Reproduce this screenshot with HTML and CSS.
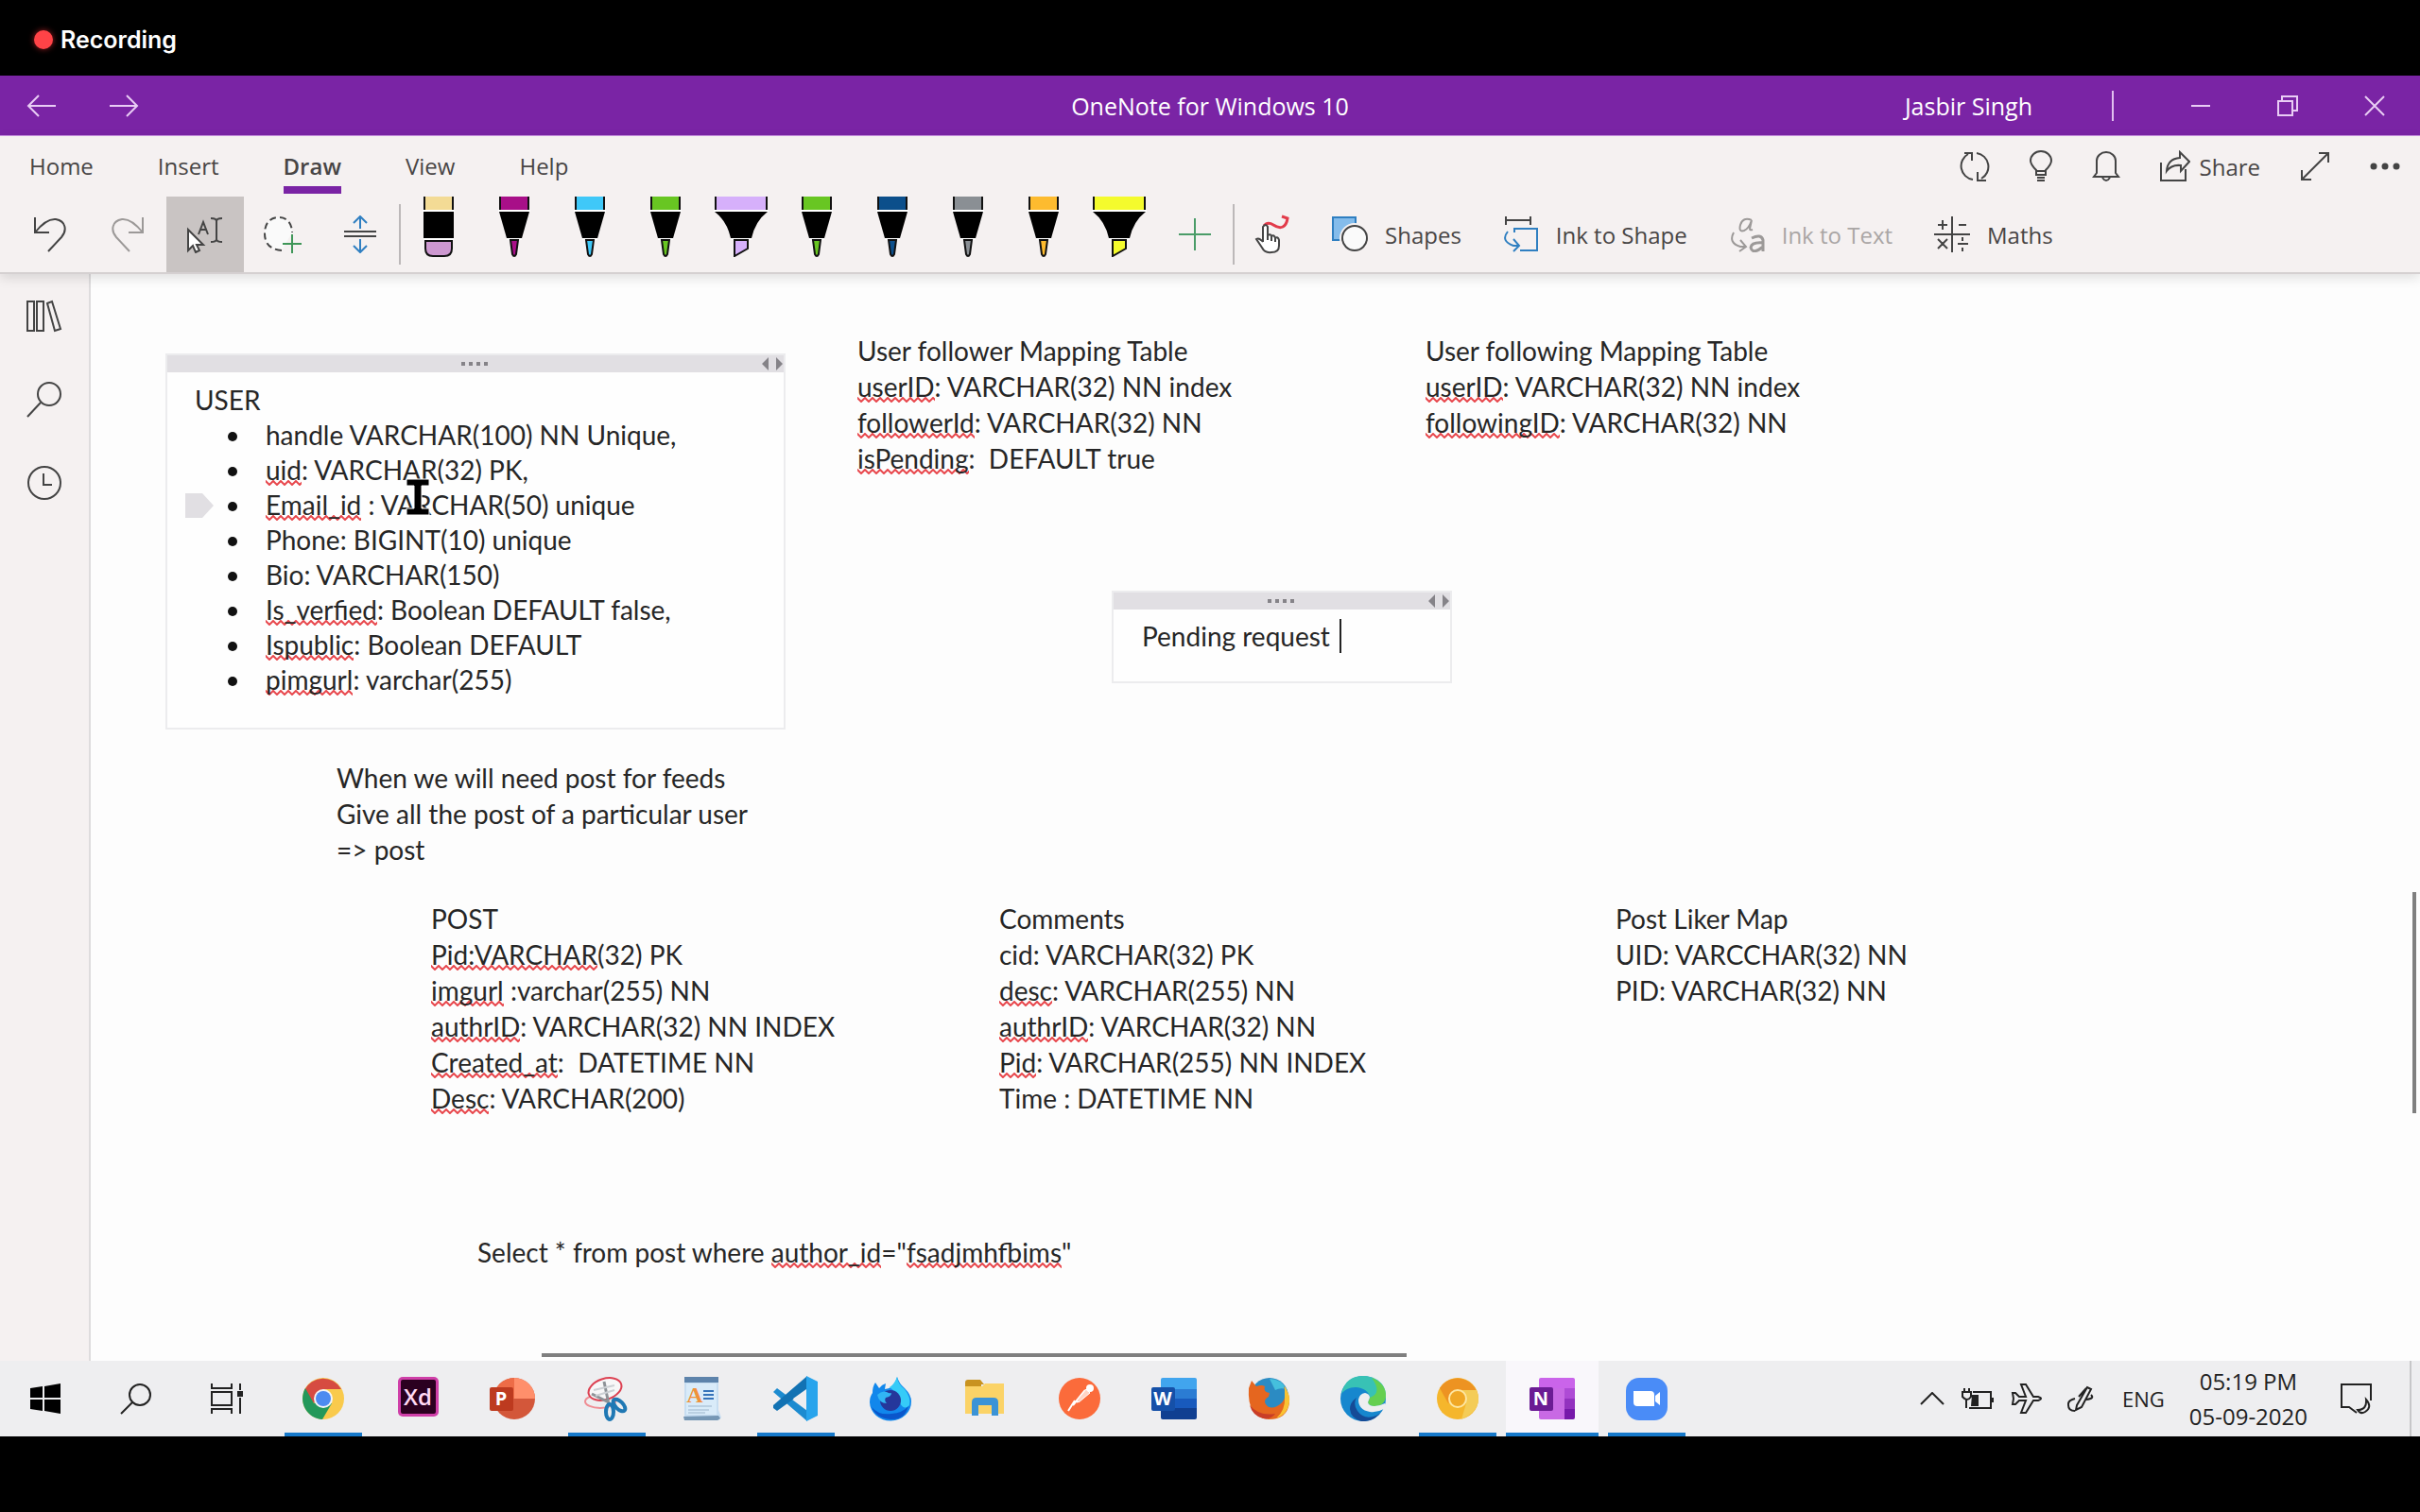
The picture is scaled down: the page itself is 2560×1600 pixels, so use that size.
FILE: index.html
```html
<!DOCTYPE html>
<html lang="en">
<head>
<meta charset="utf-8">
<title>OneNote for Windows 10</title>
<link rel="stylesheet" href="styles.css">
</head>
<body>
<svg class="sprite" aria-hidden="true">
  <symbol id="pen" viewBox="0 0 34 64">
    <path d="M1 0h32v14H1z" fill="currentColor"/><path d="M2 0v14M32 0v14" stroke="#111" stroke-width="2"/>
    <path d="M0 14h34v2H0z" fill="#fff"/><path d="M1 16h32l-8 28H9z"/><path d="M9 44h16v2H9z" fill="#fff"/>
    <path d="M13 46h8l-2 15q-2 4-4 0z" fill="currentColor" stroke="#111" stroke-width="2"/>
  </symbol>
  <symbol id="marker" viewBox="0 0 58 64">
    <path d="M1 0h56v14H1z" fill="currentColor"/><path d="M2 0v14M56 0v14" stroke="#111" stroke-width="2"/>
    <path d="M0 14h58v2H0z" fill="#fff"/><path d="M1 16h56Q44 26 40 44H18Q14 26 1 16z"/><path d="M18 44h22v2H18z" fill="#fff"/>
    <path d="M22 46h14v9l-14 8z" fill="currentColor" stroke="#111" stroke-width="2"/>
  </symbol>
</svg>

<div class="recording"><span class="rec-dot"></span>Recording</div>

<header class="titlebar">
  <div class="nav">
    <button aria-label="Back"><svg width="32" height="26" viewBox="0 0 32 26"><path d="M31 13H2M13 2 2 13l11 11"/></svg></button>
    <button aria-label="Forward"><svg width="32" height="26" viewBox="0 0 32 26"><path d="M1 13h29M19 2l11 11-11 11"/></svg></button>
  </div>
  <h1>OneNote for Windows 10</h1>
  <div class="window">
    <span class="account">Jasbir Singh</span>
    <span class="bar"></span>
    <button aria-label="Minimise"><svg width="22" height="22" viewBox="0 0 22 22"><path d="M1 11h20"/></svg></button>
    <button aria-label="Restore"><svg width="22" height="22" viewBox="0 0 22 22"><path d="M1 6h15v15H1zM5 6V1h16v15h-5"/></svg></button>
    <button aria-label="Close"><svg width="22" height="22" viewBox="0 0 22 22"><path d="m1 1 20 20M21 1 1 21"/></svg></button>
  </div>
</header>

<section class="ribbon">
  <div class="tabrow">
    <nav class="tabs">
      <a href="#home">Home</a><a href="#insert">Insert</a><a href="#draw" class="current">Draw</a><a href="#view">View</a><a href="#help">Help</a>
    </nav>
    <div class="actions">
      <button aria-label="Sync"><svg width="32" height="34" viewBox="0 0 32 34"><path d="M14 31A14.500 14.500 0 0 1 9 4M5 3h8v8M18 3a14.500 14.500 0 0 1 5 27M28 32h-9v-9"/></svg></button>
      <button aria-label="Tell me"><svg width="24" height="34" viewBox="0 0 24 34"><path d="M7 26v-5Q1 15 1 11a11 10 0 0 1 22 0q0 4-6 10v5zM7 22h10M8 32h8M8 29h8"/></svg></button>
      <button aria-label="Notifications"><svg width="30" height="34" viewBox="0 0 30 34"><path d="M5 24V11a10 9 0 0 1 20 0v13l3 4H2zM11 29q4 6 8 0"/></svg></button>
      <button class="share"><svg width="32" height="34" viewBox="0 0 32 34"><path d="M1 13v19h26V20M21 2l10 10-9 10v-6q-10-1-15 6 1-13 14-14z"/></svg>Share</button>
      <button aria-label="Full screen"><svg width="32" height="32" viewBox="0 0 32 32"><path d="M2 30 30 2M20 2h10v10M2 20v10h10"/></svg></button>
      <button aria-label="More"><svg width="32" height="8" viewBox="0 0 32 8"><g fill="#444" stroke="none"><circle cx="4" cy="4" r="3.500"/><circle cx="16" cy="4" r="3.500"/><circle cx="28" cy="4" r="3.500"/></g></svg></button>
    </div>
  </div>
  <div class="toolbar">
    <button class="tool" aria-label="Undo"><svg width="36" height="40" viewBox="0 0 36 40"><path d="M2 2v16h15M2 18Q14 3 24 4c11 2 12 12 6 19L16 38"/></svg></button>
    <button class="tool faded" aria-label="Redo"><svg width="36" height="40" viewBox="0 0 36 40"><path d="M34 2v16H19M34 18Q22 3 12 4C1 6 0 16 6 23l14 15"/></svg></button>
    <button class="tool pressed" aria-label="Select objects or type text"><svg width="40" height="40" viewBox="0 0 40 40"><path d="M2 15v22l5-5 3 7 4-2-3-6h7z" fill="#fff"/><path d="m13 20 5-13 5 13M15 15h6M26 3q6 0 6 3 0-3 6-3M32 6v20M26 28q6 0 6-3 0 3 6 3"/></svg></button>
    <button class="tool" aria-label="Lasso select"><svg width="42" height="42" viewBox="0 0 42 42"><path d="M20 38C7 37 2 30 2 20 2 9 8 3 17 3s14 7 14 16" fill="#fafafa" stroke-dasharray="7 4"/><path d="M31 21v20M21 31h20" stroke="#3f9658"/></svg></button>
    <button class="tool" aria-label="Insert space"><svg width="36" height="40" viewBox="0 0 36 40"><path d="M1 17h34M1 22h34"/><path d="M18 14V2M11 8l7-7 7 7M18 25v13M11 32l7 7 7-7" stroke="#2f7fc1"/></svg></button>
    <span class="rule"></span>
    <button class="pen" aria-label="Eraser"><svg width="34" height="64" viewBox="0 0 34 64"><path d="M1 0h32v14H1z" fill="#f3db95" stroke="none"/><path d="M2 0v14M32 0v14" stroke="#111"/><path d="M0 14h34v2H0zM1 44h32v2H1z" fill="#fff" stroke="none"/><path d="M1 16h32v28H1z" fill="#000" stroke="none"/><path d="M3 47h28v8q0 8-8 8H11q-8 0-8-8z" fill="#cd98d0" stroke="#111"/></svg></button>
    <button class="pen magenta" aria-label="Magenta pen"><svg width="34" height="64"><use href="#pen"/></svg></button>
    <button class="pen cyan" aria-label="Cyan pen"><svg width="34" height="64"><use href="#pen"/></svg></button>
    <button class="pen green" aria-label="Green pen"><svg width="34" height="64"><use href="#pen"/></svg></button>
    <button class="pen lilac" aria-label="Lilac highlighter"><svg width="58" height="64"><use href="#marker"/></svg></button>
    <button class="pen green" aria-label="Green pen"><svg width="34" height="64"><use href="#pen"/></svg></button>
    <button class="pen blue" aria-label="Blue pen"><svg width="34" height="64"><use href="#pen"/></svg></button>
    <button class="pen grey" aria-label="Grey pen"><svg width="34" height="64"><use href="#pen"/></svg></button>
    <button class="pen orange" aria-label="Orange pen"><svg width="34" height="64"><use href="#pen"/></svg></button>
    <button class="pen yellow" aria-label="Yellow highlighter"><svg width="58" height="64"><use href="#marker"/></svg></button>
    <button class="pen add" aria-label="Add pen"><svg width="36" height="36" viewBox="0 0 36 36"><path d="M18 1v34M1 18h34" stroke="#4a9c68"/></svg></button>
    <span class="rule"></span>
    <div class="convert">
      <button aria-label="Draw with touch"><svg width="38" height="42" viewBox="0 0 38 42"><path d="M10 12q4-5 10-1t10 2 5-9l-6-2" stroke="#e23b4a" stroke-width="3"/><path d="M9 29V13q3-4 5 0v9q3-2 4 1 3-2 4 2 3-2 4 2v6q0 7-8 7-7 1-10-5l-6-9q3-2 7 3M14 22v5M18 23v5M22 25v4" fill="#fff"/></svg></button>
      <button><svg width="38" height="38" viewBox="0 0 38 38"><path d="M1 1h24v24H1z" fill="#84bceb" stroke="#2f7fc1"/><circle cx="24" cy="23" r="13" fill="#fafafa" stroke="#f5f1f1" stroke-width="6"/><circle cx="24" cy="23" r="13" fill="#fafafa"/></svg>Shapes</button>
      <button><svg width="38" height="38" viewBox="0 0 38 38"><path d="M3 4h26M3 0v9M29 0v9"/><path d="M12 17v-4h24v23H18M5 16q-8 10 6 15h6M11 24l6 7-6 6" stroke="#2f7fc1"/></svg>Ink to Shape</button>
      <button class="faded" disabled><svg width="38" height="38" viewBox="0 0 38 38"><path d="M24 4q-9-4-12 5-2 8 4 6 5-2 8-11l-2 9q0 2 3 1M5 17q-6 11 7 15h6M12 25l6 7-7 5"/><path d="M24 23q10-5 12 2v12M36 28q-12-1-13 5 2 8 13-1" stroke-width="3"/></svg>Ink to Text</button>
      <button><svg width="38" height="38" viewBox="0 0 38 38"><path d="M19 0v38M0 19h38M4 9h10M9 4v10M26 9h8M4 24l10 10M14 24 4 34M25 29h11M30 22v4M30 33v4"/></svg>Maths</button>
    </div>
  </div>
</section>

<main class="workspace">
  <aside class="rail">
    <button aria-label="Notebooks"><svg width="38" height="36" viewBox="0 0 38 36"><path d="M1 2h7v31H1zM11 2h7v31h-7zM22 4l5-2 9 29-6 2z"/></svg></button>
    <button aria-label="Search"><svg width="38" height="40" viewBox="0 0 38 40"><circle cx="24" cy="14" r="12"/><path d="M15 23 1 38"/></svg></button>
    <button aria-label="Recent notes"><svg width="38" height="38" viewBox="0 0 38 38"><circle cx="19" cy="19" r="17"/><path d="M18 9v12h9"/></svg></button>
  </aside>
  <section class="canvas" aria-label="Page">
    <article class="note framed user">
      <div class="grip"><svg class="dots" width="30" height="4" viewBox="0 0 30 4"><path d="M0 0h4v4H0zM8 0h4v4H8zM16 0h4v4h-4zM24 0h4v4h-4z"/></svg><svg class="sizer" width="24" height="14" viewBox="0 0 24 14"><path d="M8 0v14L1 7zM16 0v14l7-7z"/></svg></div>
      <div class="body">
        <p>USER</p>
        <ul>
          <li>handle VARCHAR(100) NN Unique,</li>
          <li><u>uid</u>: VARCHAR(32) PK,</li>
          <li class="marked"><u>Email_id</u> : VARCHAR(50) unique</li>
          <li>Phone: BIGINT(10) unique</li>
          <li>Bio: VARCHAR(150)</li>
          <li><u>Is_verfied</u>: Boolean DEFAULT false,</li>
          <li><u>Ispublic</u>: Boolean DEFAULT</li>
          <li><u>pimgurl</u>: varchar(255)</li>
        </ul>
      </div>
    </article>
    <article class="note follower">
      <p>User follower Mapping Table</p>
      <p><u>userID</u>: VARCHAR(32) NN index</p>
      <p><u>followerId</u>: VARCHAR(32) NN</p>
      <p><u>isPending</u>:&nbsp; DEFAULT true</p>
    </article>
    <article class="note following">
      <p>User following Mapping Table</p>
      <p><u>userID</u>: VARCHAR(32) NN index</p>
      <p><u>followingID</u>: VARCHAR(32) NN</p>
    </article>
    <article class="note framed pending">
      <div class="grip"><svg class="dots" width="30" height="4" viewBox="0 0 30 4"><path d="M0 0h4v4H0zM8 0h4v4H8zM16 0h4v4h-4zM24 0h4v4h-4z"/></svg><svg class="sizer" width="24" height="14" viewBox="0 0 24 14"><path d="M8 0v14L1 7zM16 0v14l7-7z"/></svg></div>
      <div class="body"><p>Pending request<span class="caret"></span></p></div>
    </article>
    <article class="note feeds">
      <p>When we will need post for feeds</p>
      <p>Give all the post of a particular user</p>
      <p>=&gt; post</p>
    </article>
    <article class="note post">
      <p>POST</p>
      <p><u>Pid:VARCHAR</u>(32) PK</p>
      <p><u>imgurl</u> :varchar(255) NN</p>
      <p><u>authrID</u>: VARCHAR(32) NN INDEX</p>
      <p><u>Created_at</u>:&nbsp; DATETIME NN</p>
      <p><u>Desc</u>: VARCHAR(200)</p>
    </article>
    <article class="note comments">
      <p>Comments</p>
      <p>cid: VARCHAR(32) PK</p>
      <p><u>desc</u>: VARCHAR(255) NN</p>
      <p><u>authrID</u>: VARCHAR(32) NN</p>
      <p><u>Pid</u>: VARCHAR(255) NN INDEX</p>
      <p>Time : DATETIME NN</p>
    </article>
    <article class="note liker">
      <p>Post Liker Map</p>
      <p>UID: VARCCHAR(32) NN</p>
      <p>PID: VARCHAR(32) NN</p>
    </article>
    <article class="note query">
      <p>Select * from post where <u>author_id</u>="<u>fsadjmhfbims</u>"</p>
    </article>
    <svg class="pointer" width="28" height="40" viewBox="0 0 28 40"><path d="M2 1h24v7h-8v24h8v7H2v-7h8V8H2z" stroke="#fff" stroke-width="1"/></svg>
    <span class="scroll-y"></span>
    <span class="scroll-x"></span>
  </section>
</main>

<footer class="taskbar">
  <div class="system">
    <button aria-label="Start"><svg width="32" height="32" viewBox="0 0 32 32"><path d="M0 5l13-2v12H0zM15 3l17-3v15H15zM0 17h13v12L0 27zM15 17h17v15l-17-3z"/></svg></button>
    <button aria-label="Search"><svg class="line" width="34" height="34" viewBox="0 0 34 34"><circle cx="21" cy="13" r="11"/><path d="M13 21 1 33"/></svg></button>
    <button aria-label="Task view"><svg class="line" width="34" height="34" viewBox="0 0 34 34"><path d="M1 1v5h21V1M1 10h21v14H1zM1 33v-5h21v5M31 1v7M31 16v17"/><path d="M29 10h4v4h-4z" fill="#222"/></svg></button>
  </div>
  <div class="apps">
    <button class="open" aria-label="Chrome"><svg width="46" height="46" viewBox="0 0 46 46"><circle cx="23" cy="23" r="22" fill="#f9ca4c"/><path d="M3 14A22 22 0 0 1 42 13H23L13 28z" fill="#d64b41"/><path d="M4 12a22 22 0 0 0 18 33l10-17-9-5-10 5z" fill="#23985a"/><circle cx="23" cy="23" r="10" fill="#f4f4f4"/><circle cx="23" cy="23" r="8" fill="#4c8bf0"/></svg></button>
    <button aria-label="Adobe XD"><svg width="46" height="46" viewBox="0 0 46 46"><rect x="2" y="0" width="43" height="42" rx="5" fill="#cf3fa8"/><rect x="5" y="3" width="37" height="36" rx="2" fill="#2b0020"/><text x="23" y="30" text-anchor="middle" class="xd">Xd</text></svg></button>
    <button aria-label="PowerPoint"><svg width="48" height="46" viewBox="0 0 48 46"><circle cx="26" cy="23" r="22" fill="#d3573a"/><path d="M26 1a22 22 0 0 1 22 22H26z" fill="#ff8f6b"/><path d="M26 1v22H4A22 22 0 0 1 26 1z" fill="#ed6c47"/><rect y="11" width="25" height="25" rx="2" fill="#bd3a1f"/><text x="12" y="30" text-anchor="middle" class="glyph">P</text></svg></button>
    <button class="open" aria-label="Snipping Tool"><svg width="48" height="48" viewBox="0 0 48 48"><ellipse cx="17" cy="27" rx="16" ry="7" fill="none" stroke="#ef8d94" stroke-width="2"/><ellipse cx="22" cy="14" rx="18" ry="11" transform="rotate(-18 22 14)" fill="#f7f7f8" stroke="#dc4152" stroke-width="2"/><path d="m21 6 5 24M8 19l18 9" stroke="#8d9297" stroke-width="3"/><path d="M10 15l22-5M12 21l20-6" stroke="#ccd0d4" stroke-width="2"/><ellipse cx="27" cy="38" rx="4" ry="8" fill="none" stroke="#1f78b4" stroke-width="4"/><ellipse cx="37" cy="31" rx="4" ry="8" transform="rotate(-45 37 31)" fill="none" stroke="#1f78b4" stroke-width="4"/></svg></button>
    <button aria-label="WordPad"><svg width="44" height="48" viewBox="0 0 44 48"><path d="M4 1h36v35l3 8-3 3H4z" fill="#c7ddf1"/><path d="M4 1h36v6H4z" fill="#5d83ab"/><path d="M6 8h32v33H6z" fill="#d9ebf9"/><path d="m3 43 37-1 2 3-3 2H4z" fill="#7697b5"/><text x="15" y="28" text-anchor="middle" class="wordpad">A</text><path d="M24 16h11M24 20h11M24 24h11" stroke="#3673ba" stroke-width="2"/><path d="M8 32h25M8 36h22M8 39h18" stroke="#9cb5cb" stroke-width="1"/></svg></button>
    <button class="open" aria-label="Visual Studio Code"><svg width="48" height="48" viewBox="0 0 48 48"><path d="M4 13 36 37v11L0 17z" fill="#1c8bd0"/><path d="M0 31 36 0v14L4 37l-4-3z" fill="#1272b3"/><path d="M35 0l12 6v36l-12 6z" fill="#28a4ec"/><path d="m35 14-14 10 14 11z" fill="#eeeef0"/></svg></button>
    <button aria-label="Firefox Developer Edition"><svg width="46" height="48" viewBox="0 0 46 48"><path d="M4 18q0-7 3-11l4 6q3-4 7-5l-1 6q8-1 11-7l2-6q2 7 8 12 7 7 7 14A22 20 0 0 1 1 28q0-6 3-10z" fill="#1187ec"/><path d="M22 12q5-3 8-11 1 8 8 13 7 9 5 17-5 6-10-2-2-11-11-17z" fill="#35cbf8"/><circle cx="23" cy="26" r="11" fill="#25379b"/><path d="M9 20q5-5 10-3 3 2 5 1 0 4-6 5-2 3 1 6-8 0-10-9z" fill="#31b5f4"/><path d="M3 33q8 9 21 7 12-1 18-8-4 15-19 14T3 33z" fill="#0a56cb"/></svg></button>
    <button aria-label="File Explorer"><svg width="46" height="40" viewBox="0 0 46 40"><path d="M2 3q0-3 3-3h13l4 5h-3v3H2z" fill="#c99320"/><path d="M2 7h18l3-3h20v32H2z" fill="#fbd367"/><path d="M9 38V24q0-5 5-5h18q5 0 5 5v14h-7V27H16v11z" fill="#3b93d6"/></svg></button>
    <button aria-label="Postman"><svg width="46" height="46" viewBox="0 0 46 46"><circle cx="23" cy="23" r="22" fill="#fb6b3b"/><path d="M11 36 18 25M16 30l13-16M20 27l12-12" stroke="#fff" stroke-width="2"/><path d="m20 25 10-12 4 4-12 10z" fill="#ffd4c5" stroke="#fff"/><circle cx="34" cy="12" r="4" fill="#fff"/></svg></button>
    <button aria-label="Word"><svg width="48" height="46" viewBox="0 0 48 46"><path d="M12 1h34q2 0 2 2v10H10V3q0-2 2-2z" fill="#41a5ee"/><path d="M10 13h38v10H10z" fill="#2b7cd3"/><path d="M10 23h38v10H10z" fill="#185abd"/><path d="M10 33h38v10q0 2-2 2H12q-2 0-2-2z" fill="#103f91"/><rect y="11" width="25" height="25" rx="2" fill="#1550a8"/><text x="12" y="30" text-anchor="middle" class="glyph">W</text></svg></button>
    <button aria-label="Firefox"><svg width="46" height="46" viewBox="0 0 46 46"><circle cx="24" cy="21" r="20" fill="#2b8bc3"/><path d="M24 2q12 0 18 11-7-2-12 1-4-8-6-12z" fill="#45c0dd"/><path d="M2 12l3-8 5 6q6-2 9 0-2 6 5 7l-1 4q-6 3-3 8 4 6 12 2 12-6 7-21 7 9 6 17-2 18-22 18Q0 43 2 12z" fill="#e5661f"/><path d="M40 10q6 9 5 17-2 13-14 17 10-9 9-22z" fill="#f9c333"/><path d="M3 30q10 12 27 9-5 7-13 5Q6 41 3 30z" fill="#c93d27"/></svg></button>
    <button aria-label="Edge"><svg width="48" height="48" viewBox="0 0 48 48"><circle cx="24" cy="24" r="24" fill="#1687ce"/><path d="M1 19C4 5 13 0 24 0c14 0 24 9 24 20 0 8-5 12-12 12-5 0-7-2-7-4 0-1 2-3 2-5 0-6-7-11-15-11-7 0-12 3-15 7z" fill="#38c2b5"/><path d="M33 2q15 6 15 19-1 11-12 11-5 0-7-4l2-5Q45 18 33 2z" fill="#65cf50"/><path d="M17 23q-4 7 1 14 7 10 20 5 4-2 6-5-8 12-22 11-11-3-12-13 0-7 7-12z" fill="#154b96"/><path d="M19 25q1-6 7-7 5 1 5 5l-2 5q1 4 7 4 5 0 11-3 2 3-1 6-7 4-15 3-12-2-12-13z" fill="#eeeef0"/></svg></button>
    <button class="open" aria-label="Chrome Canary"><svg width="46" height="46" viewBox="0 0 46 46"><circle cx="23" cy="23" r="22" fill="#f5b62c"/><path d="M4 12a22 22 0 0 1 38 1l2 5H23L13 28z" fill="#ed9322"/><path d="M23 14h20q8 20-16 31l5-17z" fill="#f4cc57"/><circle cx="23" cy="23" r="9" fill="#f0a725" stroke="#fde6a1" stroke-width="2"/></svg></button>
    <button class="open active" aria-label="OneNote"><svg width="48" height="46" viewBox="0 0 48 46"><path d="M12 1h34q2 0 2 2v10H10V3q0-2 2-2z" fill="#ca64ea"/><path d="M10 12h27v33H12q-2 0-2-2z" fill="#c869e4"/><path d="M37 12h11v11H37z" fill="#ae4bd5"/><path d="M37 23h11v11H37z" fill="#9332bf"/><path d="M37 34h11v9q0 2-2 2h-9z" fill="#7719aa"/><rect y="11" width="25" height="25" rx="2" fill="#6b1c94"/><text x="12" y="30" text-anchor="middle" class="glyph">N</text></svg></button>
    <button class="open" aria-label="Zoom"><svg width="46" height="46" viewBox="0 0 46 46"><rect x="1" y="1" width="44" height="45" rx="14" fill="#4a8cf7"/><path d="M9 15h18q4 0 4 4v12H13q-4 0-4-4zM32 20l5-4v14l-5-4z" fill="#fff"/></svg></button>
  </div>
  <div class="tray">
    <button aria-label="Show hidden icons"><svg class="line" width="26" height="14" viewBox="0 0 26 14"><path d="M1 13 13 1l12 12"/></svg></button>
    <button aria-label="Battery"><svg class="line" width="34" height="24" viewBox="0 0 34 24"><path d="M8 22h23V5H12M33 11v5M3 1v4M8 1v4M1 5h9v5q-4 6-9 0zM5 13v9"/><path d="M11 8h7v12h-8z" fill="#222" stroke="none"/></svg></button>
    <button class="plane" aria-label="Aeroplane mode"><svg class="line" width="34" height="34" viewBox="0 0 34 34"><path d="M2 11h3l4 4h7L11 2h5l8 13h5q6 2 0 4h-5l-8 13h-5l5-13H9l-4 4H2l1-6z"/></svg></button>
    <button aria-label="Pen workspace"><svg class="line" width="28" height="28" viewBox="0 0 28 28"><path d="M10 21 21 2l4 2-10 19-6 3zM12 12l8-9M20 15q9-1 5-5M8 14q-8 2-7 7 0 6 7 6"/></svg></button>
    <span class="lang">ENG</span>
    <div class="clock"><time>05:19 PM</time><time>05-09-2020</time></div>
    <button class="center" aria-label="Notifications"><svg class="line" width="34" height="34" viewBox="0 0 34 34"><path d="M17 32 9 26H1V2h31v17M27 18q7 8-1 13-5 3-8-2 10 0 9-11z"/></svg></button>
  </div>
</footer>
</body>
</html>
```
FILE: styles.css
```css
* { box-sizing: border-box; margin: 0; padding: 0; }

body {
  display: flex;
  flex-direction: column;
  min-height: 100vh;
  padding-bottom: 80px;
  background: #000;
  color: #484545;
  font-family: "Open Sans", "Noto Sans", sans-serif;
  font-size: 24px;
}

button { display: flex; align-items: center; justify-content: center; border: 0; background: none; color: inherit; font: inherit; }
svg { display: block; flex: none; }
.sprite { position: absolute; width: 0; height: 0; }

/* Recording strip */
.recording { display: flex; align-items: center; gap: 8px; height: 80px; padding: 4px 36px 0; color: #fff; font-family: Inter, sans-serif; font-size: 25px; font-weight: 600; line-height: 32px; }
.rec-dot { width: 20px; height: 20px; border-radius: 50%; background: #ff4347; box-shadow: 0 0 6px #a02024; }

/* Title bar */
.titlebar { display: grid; grid-template-columns: 1fr auto 1fr; align-items: center; height: 64px; background: #7a24a5; border-bottom: 1px solid #c78fe0; color: #fff; }
.titlebar h1, .account { font-size: 25px; font-weight: 400; }
.titlebar svg { fill: none; stroke: #e9cdf5; stroke-width: 2; }
.nav, .window { display: flex; align-items: center; }
.nav button { width: 87px; height: 62px; }
.window { justify-content: flex-end; padding-right: 2px; }
.window button { width: 92px; height: 62px; }
.bar { width: 2px; height: 32px; margin: 0 46px 0 84px; background: #e0c0ef; }

/* Ribbon */
.ribbon { position: relative; z-index: 1; background: #f5f1f1; border-bottom: 2px solid #d5d0d1; box-shadow: 0 4px 12px rgb(0 0 0 / 12%); }
.ribbon svg { fill: none; stroke: #444; stroke-width: 2; }
.tabrow { display: flex; justify-content: space-between; height: 64px; padding: 0 21px 0 31px; }
.tabs { display: flex; gap: 68px; }
.tabs a { height: 61px; padding-top: 12px; border-bottom: 8px solid transparent; color: inherit; line-height: 40px; text-decoration: none; }
.tabs .current { border-color: #7a24a5; font-weight: 600; }
.actions { display: flex; align-items: center; gap: 42px; }
.share { gap: 10px; }
.toolbar { display: flex; height: 80px; padding-left: 12px; }
.tool { width: 82px; }
.pressed { background: #c9c4c3; }
.faded, .faded svg { color: #aaa6a5; stroke: #9c9998; }
.rule { width: 2px; height: 64px; margin-top: 8px; background: #bcb8b9; }
.pen { width: 80px; align-items: flex-start; }
.pen.add { align-items: center; }
.pen use { stroke: none; fill: #000; }
.magenta { color: #a80f88; }
.cyan { color: #3fc8f8; }
.green { color: #68c622; }
.lilac { color: #d6b0fb; }
.blue { color: #0c4f8b; }
.grey { color: #8a8f94; }
.orange { color: #fdbb2f; }
.yellow { color: #f4fb2d; }
.convert { display: flex; gap: 44px; padding-left: 21px; }
.convert button { gap: 18px; }

/* Page area */
.workspace { display: flex; flex: 1; min-height: 1150px; background: #fdfdfd; }
.rail { width: 96px; padding-top: 1px; border-right: 2px solid #dedcdd; background: #f5f1f1; }
.rail button { width: 94px; height: 88px; }
.rail svg { fill: none; stroke: #444; stroke-width: 2; }
.canvas { position: relative; flex: 1; }

.note { position: absolute; color: #262626; font-family: Lato, sans-serif; font-size: 28px; line-height: 38px; white-space: nowrap; }
.note u { background: url("data:image/svg+xml,%3Csvg xmlns='http://www.w3.org/2000/svg' width='8' height='6'%3E%3Cpath d='M-1 0 4 5 9 0' fill='none' stroke='%23e8474c' stroke-width='2'/%3E%3C/svg%3E") left bottom repeat-x; text-decoration: none; }
.framed { border: 2px solid #ececee; background: #fefefe; }
.grip { display: flex; align-items: center; justify-content: center; height: 18px; background: #e1dfe3; fill: #858388; }
.sizer { position: absolute; right: 0; }

.user { left: 79px; top: 84px; width: 656px; height: 398px; line-height: 37px; }
.user .body { padding: 11px 29px; }
.user ul { list-style: none; }
.user li { position: relative; padding-left: 75px; }
.user li::before { content: ""; position: absolute; left: 35px; top: 15px; width: 10px; height: 10px; border-radius: 50%; background: #111; }
.user .marked::after { content: ""; position: absolute; left: -10px; top: 6px; width: 30px; height: 26px; background: #e1dfe3; clip-path: polygon(0 0, 60% 0, 100% 50%, 60% 100%, 0 100%); }
.follower { left: 811px; top: 62px; }
.following { left: 1412px; top: 62px; }
.pending { left: 1080px; top: 335px; width: 360px; height: 98px; }
.pending .body { padding: 9px 30px; }
.pending p { display: flex; align-items: center; gap: 10px; }
.caret { width: 2px; height: 36px; background: #222; }
.feeds { left: 260px; top: 514px; }
.post { left: 360px; top: 663px; }
.comments { left: 961px; top: 663px; }
.liker { left: 1613px; top: 663px; }
.query { left: 409px; top: 1016px; }
.pointer { position: absolute; left: 332px; top: 216px; }
.scroll-y { position: absolute; right: 4px; top: 654px; width: 4px; height: 234px; background: #7f7f7f; }
.scroll-x { position: absolute; left: 477px; bottom: 4px; width: 915px; height: 4px; background: #7f7f7f; }

/* Taskbar */
.taskbar { display: flex; height: 80px; background: #eeeef0; color: #222; }
.system, .apps, .tray { display: flex; }
.system button { width: 96px; }
.line { fill: none; stroke: #222; stroke-width: 2; }
.apps { gap: 18px; padding-left: 13px; }
.apps button { width: 82px; padding-top: 4px; border-bottom: 4px solid transparent; }
.apps .open { border-color: #1679ca; }
.apps .active { width: 98px; margin: 0 -8px; background: #f9f7fb; }
.glyph { fill: #fff; font-size: 20px; font-weight: 700; }
.xd { fill: #ffd9f5; font-size: 24px; font-weight: 600; }
.wordpad { fill: #f0913a; font-family: "Liberation Serif", serif; font-size: 24px; font-weight: 700; }
.tray { align-items: center; gap: 18px; margin-left: auto; padding-right: 9px; }
.plane { margin-right: 8px; }
.lang { margin-left: 12px; font-size: 22px; }
.clock { display: flex; flex-direction: column; align-items: center; margin-left: 8px; line-height: 37px; }
.center { align-self: stretch; width: 92px; padding-right: 22px; border-right: 2px solid #c7c7c9; }
```
